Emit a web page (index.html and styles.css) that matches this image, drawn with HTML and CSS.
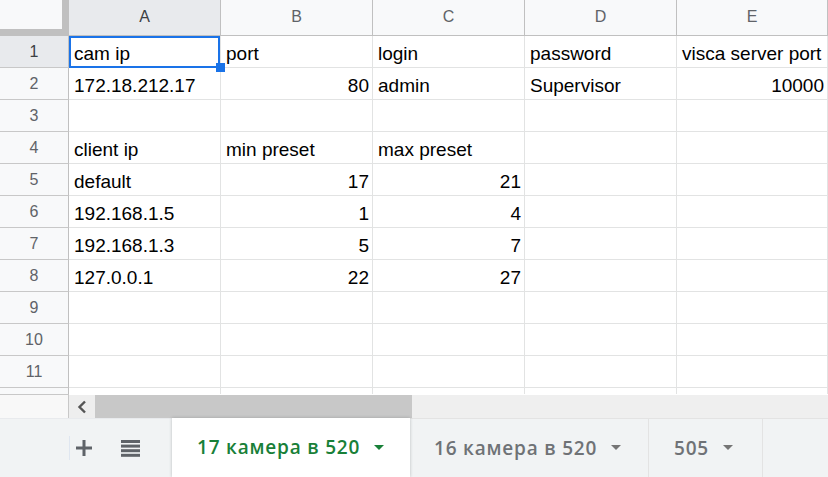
FILE: index.html
```html
<!DOCTYPE html>
<html>
<head>
<meta charset="utf-8">
<link rel="stylesheet" href="styles.css">
</head>
<body>
<div class="app">
  <div class="sheet">
    <div class="grid">
      <div class="corner"></div>
      <div class="ch sel">A</div><div class="ch">B</div><div class="ch">C</div><div class="ch">D</div><div class="ch">E</div>

      <div class="rh sel">1</div><div class="c">cam ip</div><div class="c">port</div><div class="c">login</div><div class="c">password</div><div class="c">visca server port</div>
      <div class="rh">2</div><div class="c">172.18.212.17</div><div class="c n">80</div><div class="c">admin</div><div class="c">Supervisor</div><div class="c n">10000</div>
      <div class="rh">3</div><div class="c"></div><div class="c"></div><div class="c"></div><div class="c"></div><div class="c"></div>
      <div class="rh">4</div><div class="c">client ip</div><div class="c">min preset</div><div class="c">max preset</div><div class="c"></div><div class="c"></div>
      <div class="rh">5</div><div class="c">default</div><div class="c n">17</div><div class="c n">21</div><div class="c"></div><div class="c"></div>
      <div class="rh">6</div><div class="c">192.168.1.5</div><div class="c n">1</div><div class="c n">4</div><div class="c"></div><div class="c"></div>
      <div class="rh">7</div><div class="c">192.168.1.3</div><div class="c n">5</div><div class="c n">7</div><div class="c"></div><div class="c"></div>
      <div class="rh">8</div><div class="c">127.0.0.1</div><div class="c n">22</div><div class="c n">27</div><div class="c"></div><div class="c"></div>
      <div class="rh">9</div><div class="c"></div><div class="c"></div><div class="c"></div><div class="c"></div><div class="c"></div>
      <div class="rh">10</div><div class="c"></div><div class="c"></div><div class="c"></div><div class="c"></div><div class="c"></div>
      <div class="rh">11</div><div class="c"></div><div class="c"></div><div class="c"></div><div class="c"></div><div class="c"></div>
      <div class="rh"></div><div class="c"></div><div class="c"></div><div class="c"></div><div class="c"></div><div class="c"></div>
    </div>
    <div class="selection"><span class="handle"></span></div>
  </div>

  <div class="hscroll">
    <div class="hs-left"></div>
    <div class="hs-btn">
      <svg width="10" height="14" viewBox="0 0 10 14"><path d="M8 1.5 L2.5 7 L8 12.5" fill="none" stroke="#555" stroke-width="2.4"/></svg>
    </div>
    <div class="hs-thumb"></div>
    <div class="hs-track"></div>
  </div>

  <div class="tabbar">
    <div class="tools">
      <span class="vline"></span>
      <svg class="plus" width="18" height="18" viewBox="0 0 18 18"><path d="M9 1 V17 M1 9 H17" stroke="#5f6368" stroke-width="3"/></svg>
      <svg class="menu" width="19" height="17" viewBox="0 0 19 17"><rect x="0" y="0" width="19" height="3" fill="#5f6368"/><rect x="0" y="4.6" width="19" height="3" fill="#5f6368"/><rect x="0" y="9.2" width="19" height="3" fill="#5f6368"/><rect x="0" y="13.8" width="19" height="3" fill="#5f6368"/></svg>
    </div>
    <div class="tab active"><span class="label">17 камера в 520</span><span class="caret"></span></div>
    <div class="tab t2"><span class="label">16 камера в 520</span><span class="caret"></span></div>
    <div class="tab t3"><span class="label">505</span><span class="caret"></span></div>
    <div class="tab-rest"></div>
  </div>
</div>
</body>
</html>
```

FILE: styles.css
```css
* { box-sizing: border-box; }
html, body { margin: 0; padding: 0; background: #fff; }
.app {
  width: 828px;
  height: 477px;
  overflow: hidden;
  display: flex;
  flex-direction: column;
  font-family: "Liberation Sans", Arial, sans-serif;
}
.sheet {
  position: relative;
  height: 394px;
  overflow: hidden;
  flex: none;
}
.grid {
  display: grid;
  grid-template-columns: 69px 152px 152px 152px 152px 151px;
  grid-template-rows: 36px;
  grid-auto-rows: 32px;
}
.corner {
  background: #f8f9fa;
  border-right: 7px solid #c0c0c0;
  border-bottom: 7px solid #c0c0c0;
}
.ch {
  background: #f8f9fa;
  border-right: 1px solid #c0c0c0;
  border-bottom: 1px solid #c0c0c0;
  color: #5f6368;
  font-size: 16px;
  display: flex;
  align-items: center;
  justify-content: center;
  padding-bottom: 1px;
}
.rh {
  background: #f8f9fa;
  border-right: 1px solid #c0c0c0;
  border-bottom: 1px solid #c8c8c8;
  color: #5f6368;
  font-size: 16px;
  display: flex;
  align-items: center;
  justify-content: center;
}
.ch.sel, .rh.sel { background: #e8eaed; color: #3c4043; }
.c {
  border-right: 1px solid #e2e3e3;
  border-bottom: 1px solid #e2e3e3;
  font-size: 19px;
  line-height: 22px;
  color: #000;
  display: flex;
  align-items: flex-end;
  padding: 0 3px 2px 5px;
  white-space: nowrap;
}
.c.n { justify-content: flex-end; }
.selection {
  position: absolute;
  left: 69px;
  top: 36px;
  width: 151px;
  height: 32px;
  border: 2px solid #1a73e8;
}
.handle {
  position: absolute;
  right: -7px;
  bottom: -6px;
  width: 9px;
  height: 9px;
  background: #1a73e8;
}

.hscroll {
  height: 24px;
  flex: none;
  display: flex;
}
.hs-left {
  width: 69px;
  background: #f8f8f8;
  border-top: 1px solid #c8c8c8;
  border-right: 1px solid #c8c8c8;
}
.hs-btn {
  width: 26px;
  background: #eeeeee;
  display: flex;
  align-items: center;
  justify-content: center;
  margin-top: 1px;
}
.hs-thumb {
  width: 317px;
  background: #c8c8c8;
  margin-top: 1px;
}
.hs-track {
  flex: 1;
  background: #efefef;
  margin-top: 1px;
}

.tabbar {
  height: 59px;
  flex: none;
  display: flex;
  background: #f1f3f4;
}
.tools {
  width: 172px;
  display: flex;
  align-items: center;
  position: relative;
  border-top: 1px solid #e8eaed;
}
.vline {
  width: 1px;
  height: 24px;
  margin-left: 69px;
  background: #dfe6f0;
}
.plus { margin-left: 5px; }
.menu { margin-left: 28px; }
.tab {
  display: flex;
  align-items: center;
  font-family: "Open Sans", Roboto, sans-serif;
  font-weight: 600;
  font-size: 19px;
  letter-spacing: 0.8px;
  color: #6f7276;
  border-top: 1px solid #e3e3e3;
  border-right: 1px solid #e3e3e3;
  padding-bottom: 1px;
  white-space: nowrap;
}
.tab .caret {
  width: 0;
  height: 0;
  border-left: 5px solid transparent;
  border-right: 5px solid transparent;
  border-top: 5px solid #757575;
  margin-left: 14px;
}
.tab.active {
  width: 238px;
  background: #fff;
  color: #188038;
  padding-left: 25px;
  border-top: none;
  border-right: none;
  box-shadow: 0 0 3px rgba(60,64,67,0.3);
  position: relative;
  z-index: 1;
}
.tab.active .caret { border-top-color: #188038; }
.t2 { width: 239px; padding-left: 24px; }
.t3 { width: 114px; padding-left: 25px; }
.tab-rest { flex: 1; border-top: 1px solid #e3e3e3; }
```
